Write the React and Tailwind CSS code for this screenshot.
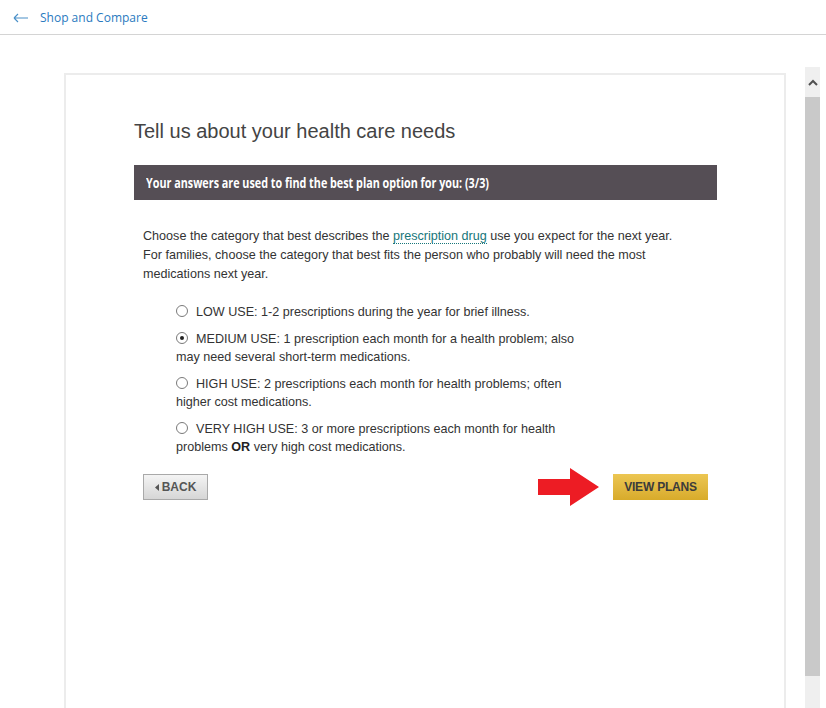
import React, { useState } from 'react';

const options = [
  { id: 'low', label: 'LOW USE: 1-2 prescriptions during the year for brief illness.' },
  { id: 'medium', label: 'MEDIUM USE: 1 prescription each month for a health problem; also may need several short-term medications.' },
  { id: 'high', label: 'HIGH USE: 2 prescriptions each month for health problems; often higher cost medications.' },
  { id: 'veryhigh', label: 'VERY HIGH USE: 3 or more prescriptions each month for health problems', bold: 'OR', rest: ' very high cost medications.' },
];

const Radio = ({ checked }) => (
  <span className="inline-block align-[-1px] w-[12px] h-[12px] rounded-full border border-[#7a7a7a] bg-white relative mr-[8px]">
    {checked && <span className="absolute left-[3px] top-[3px] w-[4px] h-[4px] rounded-full bg-[#222]" />}
  </span>
);

const App = () => {
  const [selected, setSelected] = useState('medium');

  return (
    <div className="w-[826px] h-[708px] overflow-hidden bg-white font-['Liberation_Sans',Arial,sans-serif]">
      {/* Top bar */}
      <div className="h-[35px] border-b border-[#d4d4d4] flex items-center pl-[13px] pt-[1px]">
        <svg width="16" height="10" viewBox="0 0 16 10" className="mr-[11px]">
          <path d="M1 5 H15 M1 5 L5 1 M1 5 L5 9" stroke="#4a90c8" strokeWidth="1.1" fill="none" />
        </svg>
        <span className="text-[12px] text-[#2a7ac0] font-['Open_Sans',sans-serif]">Shop and Compare</span>
      </div>

      <div className="flex">
        {/* Card */}
        <div className="ml-[64px] mt-[38px] w-[722px] h-[700px] border-2 border-[#ececec] border-b-0 pl-[68px] pt-[44px]">
          <h1 className="text-[20px] leading-[24px] text-[#444]">Tell us about your health care needs</h1>

          <div className="mt-[22px] w-[583px] h-[35px] bg-[#554e55] flex items-center px-[12px]">
            <span className="inline-block origin-left scale-x-[0.77] whitespace-nowrap text-white font-bold text-[14px] font-['Open_Sans',sans-serif] -mt-[1px]">
              Your answers are used to find the best plan option for you: (3/3)
            </span>
          </div>

          <div className="pl-[9px] w-[574px]">
            <p className="mt-[27px] text-[12.6px] leading-[19px] text-[#333]">
              Choose the category that best describes the{' '}
              <span className="text-[#17767a] border-b border-dotted border-[#17767a]">prescription drug</span> use you expect for the next year.
              <br />
              For families, choose the category that best fits the person who probably will need the most medications next year.
            </p>

            <div className="mt-[19px] pl-[33px] w-[443px] flex flex-col gap-[9px]">
              {options.map((o) => (
                <label key={o.id} className="text-[12.6px] leading-[18px] text-[#333] cursor-pointer" onClick={() => setSelected(o.id)}>
                  <Radio checked={selected === o.id} />
                  {o.label}
                  {o.bold && (
                    <>
                      {' '}
                      <b className="text-[#222]">{o.bold}</b>
                      {o.rest}
                    </>
                  )}
                </label>
              ))}
            </div>

            <div className="mt-[12px] flex items-center w-[565px]">
              <button className="w-[65px] h-[26px] border border-[#a9a9a9] bg-gradient-to-b from-[#f4f4f4] to-[#d6d6d6] flex items-center justify-center text-[12px] font-bold text-[#555]">
                <svg width="4" height="7" viewBox="0 0 4 7" className="mr-[3px]">
                  <polygon points="4,0 4,7 0,3.5" fill="#555" />
                </svg>
                BACK
              </button>
              <div className="ml-auto flex items-center">
                <svg width="62" height="38" viewBox="0 0 62 38" className="mr-[13px]">
                  <polygon points="0,11 32,11 32,0 61,19 32,38 32,27 0,27" fill="#ed1c24" />
                </svg>
                <button className="w-[95px] h-[26px] bg-gradient-to-b from-[#ecc652] to-[#d8ab2a] text-[12px] font-bold text-[#3b3b3b] tracking-[-0.2px]">
                  VIEW PLANS
                </button>
              </div>
            </div>
          </div>
        </div>

        {/* Scrollbar */}
        <div className="ml-[19px] mt-[32px] w-[15px] h-[700px] bg-[#efefef] flex flex-col">
          <div className="h-[30px] flex items-center justify-center">
            <svg width="10" height="7" viewBox="0 0 10 7">
              <path d="M1 6 L5 2 L9 6" stroke="#505050" strokeWidth="2" fill="none" />
            </svg>
          </div>
          <div className="h-[579px] bg-[#c9c9c9]" />
        </div>
      </div>
    </div>
  );
};

export default App;
